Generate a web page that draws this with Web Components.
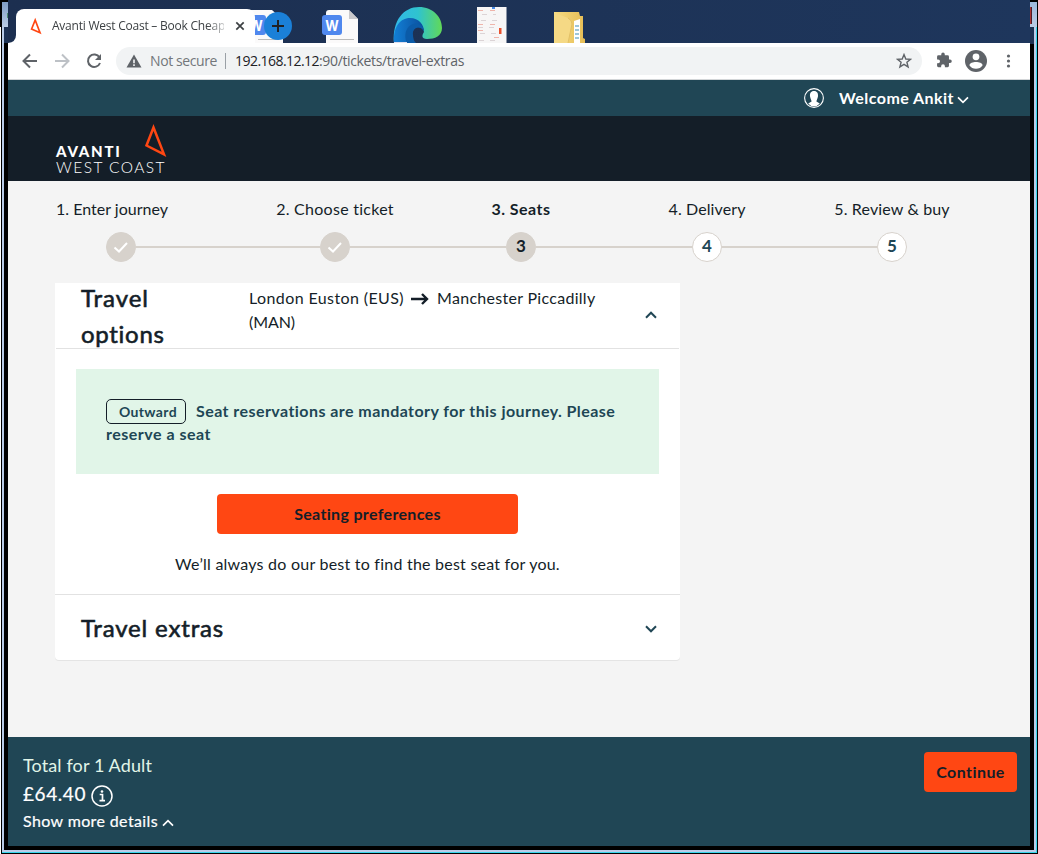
<!DOCTYPE html>
<html lang="en">
<head>
<meta charset="utf-8">
<title>Avanti West Coast – Book Cheap</title>
<style>
html,body{margin:0;width:1038px;height:854px;overflow:hidden;background:#000}
body{font:400 16px/24px Lato,"Open Sans",sans-serif;color:#141e28}
</style>
</head>
<body>
<window-frame>
  <desktop-strip slot="strip"></desktop-strip>
  <browser-toolbar></browser-toolbar>
  <account-bar></account-bar>
  <brand-header></brand-header>
  <main-area></main-area>
  <basket-footer></basket-footer>
</window-frame>
<script>
const define = (name, html, ready) => customElements.define(name, class extends HTMLElement {
  constructor() {
    super();
    const t = document.createElement('template');
    t.innerHTML = html;
    this.attachShadow({ mode: 'open' }).append(t.content.cloneNode(true));
  }
  connectedCallback() { if (ready) ready(this); }
});

/* A single line of text tracked so that it fills the width in its "w" attribute. */
define('fit-text', `<style>:host{display:inline-block;white-space:nowrap}span{display:inline-block}</style><span><slot></slot></span>`, el => {
  const fit = () => {
    const s = el.shadowRoot.querySelector('span');
    const n = el.textContent.length;
    s.style.letterSpacing = '0';
    const w = s.getBoundingClientRect().width;
    if (n && w) s.style.letterSpacing = ((+el.getAttribute('w') - w) / n) + 'px';
  };
  fit();
  document.fonts.ready.then(fit);
  window.addEventListener('load', fit);
});

define('chevron-icon', `<style>:host{display:block;width:12px;height:8px}:host([up]) svg{transform:rotate(180deg)}svg{display:block}</style>
<svg width="12" height="8" viewBox="0 0 12 8" fill="none" stroke="currentColor" style="stroke-width:var(--sw,2)"><path d="M1 1.3 6 6.3 11 1.3"/></svg>`);

define('window-frame', `<style>
:host{display:block;width:1038px;height:854px;box-sizing:border-box;padding:0 8px 8px;
background:
linear-gradient(#4e8a70,#4e8a70) 7px 13px/1px 5px no-repeat,
linear-gradient(#a33,#a33) 1030px 7px/1px 17px no-repeat,
linear-gradient(#501c28,#501c28) 1031px 7px/1px 17px no-repeat,
linear-gradient(#7f9cc2,#b9cce6) 2px 2px/6px 25px no-repeat,
linear-gradient(#9db8da,#b9cce6) 1030px 2px/7px 25px no-repeat,
linear-gradient(#1d3254,#1d3254) 4px 27px/4px 16px no-repeat,
linear-gradient(#1d3254,#1d3254) 1030px 27px/4px 17px no-repeat,
linear-gradient(#38d6ec,#38d6ec) 2px 852px/1034px 1px no-repeat,
linear-gradient(#38d6ec,#38d6ec) 1036px 3px/1px 850px no-repeat,
linear-gradient(#b9cce8,#b9cce8) 2px 850px/1034px 2px no-repeat,
linear-gradient(#b9cce8,#b9cce8) 2px 4px/2px 848px no-repeat,
linear-gradient(#b9cce8,#b9cce8) 1034px 4px/2px 848px no-repeat,
linear-gradient(#fff,#fff) 0 27px/1px 827px no-repeat,
#000}
.c{display:flex;flex-direction:column;height:846px}
</style><div class="c"><slot name="strip"></slot><slot></slot></div>`);

define('desktop-strip', `<style>
:host{display:block;height:43px;position:relative;background:linear-gradient(90deg,#1c2f50,#1e365c);overflow:hidden}
svg.bg{position:absolute;left:0;top:0}
.row{display:flex;padding:9px 0 0 8px;position:relative;height:34px}
.tab{width:239px;height:34px;background:#fff;border-radius:8px 8px 0 0;display:flex;align-items:center;box-sizing:border-box;padding-left:14px;font:12px/16px "Open Sans","Noto Sans",sans-serif;color:#3c4043}
.t{margin-left:9px;width:172px;overflow:hidden;-webkit-mask:linear-gradient(90deg,#000 90%,rgba(0,0,0,.25));mask:linear-gradient(90deg,#000 90%,rgba(0,0,0,.25))}
.x{margin-left:11px}
.add{margin:3px 0 0 9px;width:28px;height:28px;border-radius:50%;background:#1b80d8}
svg{display:block}
</style>
<svg class="bg" width="1022" height="43" viewBox="8 0 1022 43">
<defs><linearGradient id="e" x1="0" x2="1"><stop offset="0" stop-color="#32b8e8"/><stop offset=".5" stop-color="#2fc3cf"/><stop offset="1" stop-color="#62d957"/></linearGradient>
<linearGradient id="b" x1="0" y1="0" x2="1" y2="0"><stop offset="0" stop-color="#127fd6"/><stop offset="1" stop-color="#0b4f9c"/></linearGradient>
<linearGradient id="f" x1="0" x2="1"><stop offset="0" stop-color="#f7dc83"/><stop offset="1" stop-color="#e6bd55"/></linearGradient></defs>
<path d="M8 43Q16 42 16 35V43Z" fill="#fff"/>
<path d="M248 10H272L283 20V43H248Z" fill="#fbfafa"/><rect x="246" y="15" width="20" height="20" rx="3" fill="#5088ee"/><path d="M258 39.5H279" stroke="#bbb"/>
<text x="249.200" y="30.500" font-family="Inter,sans-serif" font-weight="700" font-size="14" textLength="13.500" lengthAdjust="spacingAndGlyphs" fill="#fff">W</text>
<path d="M326 13Q326 10 329 10H349L358 19V43H326Z" fill="#fbfafa"/><path d="M349 10V19H358Z" fill="#c9c9cc"/><path d="M330 39.500H354" stroke="#bbb"/>
<rect x="322" y="15" width="20" height="20" rx="3" fill="#5088ee"/><text x="325.200" y="30.500" font-family="Inter,sans-serif" font-weight="700" font-size="14" textLength="13.500" lengthAdjust="spacingAndGlyphs" fill="#fff">W</text>
<path d="M394 43C392 20 404 7 419 7C433 7 442 17 442 28C442 36 435 39 427 39C421 39 422 35 424 32C423 25 416 22 409 23Z" fill="url(#e)"/>
<path d="M394 43C393 27 400 18 410 18C419 18 424 25 424 31C420 25 413 27 412 34C412 38 413 41 414 43Z" fill="url(#b)"/>
<path d="M407 43C403 34 407 24 416 23.500C421 24 424 28 424 31C419 24 412 28 413 35Q413 40 416 43Z" fill="#0b5ba8"/><path d="M394 42.500H407" stroke="#dde"/>
<rect x="477" y="7" width="29.500" height="36" fill="#f7f6f6"/><g stroke="#dcd4d6" stroke-width="1" stroke-dasharray="5 6"><path d="M482 14.500H496M481 20.500H500M478 27.500H498M480 33.500H497M479 40.500H499"/></g><g stroke="#efb4aa" stroke-dasharray="5 7"><path d="M478 10.500H501M478 24.500H501M478 30.500H490M494 37.500H501"/></g><path d="M492 7H495V9H492Z" fill="#4a8de8"/><path d="M499 28H501.500V34H499Z" fill="#e8512e"/>
<path d="M554 12H579L580 16H583V38L585 39V43H554Z" fill="url(#f)"/><path d="M574 21L580 19V43H574Z" fill="#fff"/><path d="M575 26H579M575 30H579M575 34H579M575 38H579" stroke="#7fb4d0" stroke-width="1.500"/><path d="M555 13L568 18Q572 20 572 24L568 43H555Z" fill="#f5d985"/><path d="M568 18Q572 20 572 24L568 43" fill="none" stroke="#e2c067"/>
</svg>
<div class="row"><div class="tab">
<svg width="13" height="18" viewBox="30 17 13 18"><path d="M35.200 20 31.600 29 40 32.700Z" fill="none" stroke="#ff4713" stroke-width="1.700"/></svg>
<span class="t"><fit-text w="173">Avanti West Coast – Book Cheap</fit-text></span>
<svg class="x" width="10" height="10" viewBox="0 0 10 10"><path d="M1.300 1.300 8.700 8.700M8.700 1.300 1.300 8.700" stroke="#3c4043" stroke-width="1.700"/></svg>
</div><div class="add"><svg width="28" height="28"><path d="M8 14H20M14 8V20" stroke="#202124" stroke-width="2"/></svg></div></div>`);

define('browser-toolbar', `<style>
:host{display:flex;align-items:center;height:37px;box-sizing:border-box;border-bottom:1px solid #d3d6d8;background:#fff;padding-left:12px;font:14px/20px "Open Sans","Noto Sans",sans-serif;color:#5f6368}
svg{display:block}
.nav{display:flex;gap:12px}
.o{display:flex;align-items:center;width:806px;height:28px;border-radius:14px;background:#f1f3f4;margin-left:12px;box-sizing:border-box;padding:0 10px}
.o>fit-text{margin-left:8px;color:#73777b}i{width:1px;height:16px;background:#9aa0a6;margin:0 9px 0 8px}
.u{display:flex}b{font-weight:400;color:#202124}.star{margin-left:auto}
.r{display:flex;align-items:center;margin-left:12px;gap:11px}
</style>
<div class="nav">
<svg width="20" height="20" viewBox="0 0 20 20"><path d="M17 10H4M10 3.500 3.500 10 10 16.500" fill="none" stroke="#5f6368" stroke-width="2"/></svg>
<svg width="20" height="20" viewBox="0 0 20 20"><path d="M3 10H16M10 3.500 16.500 10 10 16.500" fill="none" stroke="#bdc1c6" stroke-width="2"/></svg>
<svg width="20" height="20" viewBox="0 0 20 20"><path d="M15.500 6.500A6.200 6.200 0 1 0 16 12" fill="none" stroke="#5f6368" stroke-width="2"/><path d="M17 3V9H11Z" fill="#5f6368"/></svg></div>
<div class="o"><svg width="16" height="16" viewBox="0 0 16 16"><path d="M8 1.500 15.500 14.500H.5Z" fill="#5f6368"/><path d="M8 6.500V10.300M8 11.300V13" stroke="#fff" stroke-width="1.500"/></svg>
<fit-text w="67">Not secure</fit-text><i></i><span class="u"><b><fit-text w="84">192.168.12.12</fit-text></b><fit-text w="145">:90/tickets/travel-extras</fit-text></span>
<svg class="star" width="16" height="16" viewBox="0 0 16 16"><path d="M8 1.600 9.800 6 14.500 6.300 10.900 9.300 12.100 13.900 8 11.400 3.900 13.900 5.100 9.300 1.500 6.300 6.200 6Z" fill="none" stroke="#5f6368" stroke-width="1.400"/></svg></div>
<div class="r"><svg width="20" height="20" viewBox="0 0 24 24"><path d="M20.500 11H19V7a2 2 0 0 0-2-2h-4V3.500a2.500 2.500 0 0 0-5 0V5H4a2 2 0 0 0-2 2v3.800h1.500a2.700 2.700 0 0 1 0 5.400H2V20a2 2 0 0 0 2 2h3.800v-1.500a2.700 2.700 0 0 1 5.400 0V22H17a2 2 0 0 0 2-2v-4h1.500a2.500 2.500 0 0 0 0-5Z" fill="#5f6368" transform="translate(2 1) scale(.84)"/></svg>
<svg width="22" height="22" viewBox="0 0 22 22"><circle cx="11" cy="11" r="11" fill="#5f6368"/><circle cx="11" cy="6.800" r="3.400" fill="#fff"/><path d="M4.400 15.200C5 11 17 11 17.600 15.200 15 20 7 20 4.400 15.200Z" fill="#fff"/></svg>
<svg width="20" height="20" viewBox="0 0 20 20" fill="#5f6368"><circle cx="10.500" cy="5" r="1.600"/><circle cx="10.500" cy="10" r="1.600"/><circle cx="10.500" cy="15" r="1.600"/></svg></div>`);

define('account-bar', `<style>
:host{display:flex;align-items:center;justify-content:flex-end;height:36px;background:#204655;color:#fff;padding-right:61px;font-weight:700;font-size:16px}
svg{display:block;margin-right:15px}chevron-icon{margin:4px 0 0 3px;--sw:1.7}
</style><svg width="20" height="20" viewBox="0 0 20 20"><circle cx="10" cy="10" r="9.400" fill="none" stroke="#fff" stroke-width="1.100"/><path d="M10 3C13.200 3 14.300 5.300 14 8.200C13.700 10.500 12.500 12 12.400 13.500L15.800 15.400Q13.400 18.300 10 18.300T4.200 15.400L7.600 13.500C7.500 12 6.300 10.500 6 8.200C5.700 5.300 6.800 3 10 3Z" fill="#fff"/></svg>
<fit-text w="115">Welcome Ankit</fit-text><chevron-icon></chevron-icon>`);

define('brand-header', `<style>
:host{display:flex;height:65px;background:#141e28;color:#fff;padding-left:48px}
.n{width:110px;padding-top:27px;display:flex;flex-direction:column}
.a{font-weight:900;font-size:15px;line-height:16px}.w{font-weight:300;font-size:15.500px;line-height:16px;white-space:nowrap;color:#fff}
svg{display:block;margin:8px 0 0 -22px}
</style><div class="n"><fit-text class="a" w="65.500">AVANTI</fit-text><fit-text class="w" w="110">WEST COAST</fit-text></div>
<svg width="24" height="36" viewBox="144 124 24 36"><path d="M153.500 127.500 146.500 145.500 164 154.300Z" fill="none" stroke="#ff4713" stroke-width="2.500"/></svg>`);

define('progress-step', `<style>
:host{display:block;color:#141e28}
.l{text-align:center;height:24px}
.d{display:flex;align-items:center;margin-top:11px}
i{flex:1;height:2px;background:#d7d2cc}
b{width:30px;height:30px;box-sizing:border-box;border-radius:50%;border:1px solid #d7d2cc;background:#fff;color:#204655;text-align:center;font-weight:700;font-size:17px;line-height:26px}
svg{display:block;margin:7px 0 0 6px}
:host([done]) b,:host([now]) b{background:#d7d2cc;color:#141e28}
:host([now]) .l{font-weight:700}
:host([first]) .l{text-align:left}
:host([first]) i:first-child{flex:none;width:50px;background:none}
:host([last]) i:last-child{background:none}
</style><div class="l"><slot></slot></div><div class="d"><i></i><b></b><i></i></div>`, el => {
  el.shadowRoot.querySelector('b').innerHTML = el.hasAttribute('done')
    ? '<svg width="16" height="14" viewBox="0 0 16 14"><path d="M1.500 7.500 6 11.500 14 3" fill="none" stroke="#fff" stroke-width="2"/></svg>'
    : el.getAttribute('num');
});

define('accordion-head', `<style>
:host{display:flex;align-items:center;height:65px;border-bottom:1px solid #e2e2e2;margin:0 1px;padding:0 22px 0 25px}
.t{font-weight:400;-webkit-text-stroke:.6px #141e28;font-size:24px;line-height:36px;width:168px;display:block}
.m{align-self:flex-start;padding-top:3px;flex:1}
</style><div class="t"><slot name="title"></slot></div><div class="m"><slot></slot></div><slot name="icon"></slot>`);

define('action-button', `<style>:host{display:flex;align-items:center;justify-content:center;height:40px;border-radius:4px;background:#ff4713;color:#141e28;font-weight:700;font-size:16px}</style><slot></slot>`);

define('seat-notice', `<style>
:host{display:block;box-sizing:border-box;height:105px;margin:20px 21px 0;padding:30px 30px 0;background:#e1f5e8;color:#204655;font-weight:700;font-size:16px}
.r{display:flex;height:25px;align-items:center}
.b{width:80px;height:25px;box-sizing:border-box;border:1px solid #141e28;border-radius:5px;font-size:14px;line-height:24px;padding-left:12px;margin-right:10px}
.m{margin-top:-2px}
.s{line-height:22px;margin-top:-1px}
</style><div class="r"><div class="b"><fit-text w="58">Outward</fit-text></div><fit-text class="m" w="419.500">Seat reservations are mandatory for this journey. Please</fit-text></div><div class="s"><fit-text w="105">reserve a seat</fit-text></div>`);

define('main-area', `<style>
:host{display:block;height:556px;background:#f4f4f4}
.p{display:grid;grid-template-columns:repeat(4,186px) 184px;padding:16px 0 0 48px;height:86px}
.card{width:625px;height:377px;margin-left:47px;background:#fff;border-radius:0 0 4px 4px;box-shadow:0 1px 0 #e4e4e4}
action-button{width:301px;margin:20px auto 0}
.n{text-align:center;height:42px;padding-top:18px;border-bottom:1px solid #e2e2e2}
.x{border:0}
.arr{display:inline-block;margin:0 8px 0 7px;vertical-align:-1px}
chevron-icon{color:#204655;margin-top:2px}chevron-icon[up]{margin-top:-2px}
</style>
<div class="p">
<progress-step done first><fit-text w="112">1. Enter journey</fit-text></progress-step>
<progress-step done><fit-text w="118">2. Choose ticket</fit-text></progress-step>
<progress-step now num="3"><fit-text w="59">3. Seats</fit-text></progress-step>
<progress-step num="4"><fit-text w="77">4. Delivery</fit-text></progress-step>
<progress-step last num="5"><fit-text w="115.500">5. Review &amp; buy</fit-text></progress-step>
</div>
<div class="card">
<accordion-head><span slot="title"><fit-text w="68">Travel</fit-text><br><fit-text w="84">options</fit-text></span><fit-text w="155">London Euston (EUS)</fit-text><svg class="arr" width="18" height="12" viewBox="0 0 18 12"><path d="M0 6H16M11 1 16 6 11 11" fill="none" stroke="#141e28" stroke-width="2.400"/></svg><fit-text w="158.500">Manchester Piccadilly</fit-text><br><fit-text w="46">(MAN)</fit-text><chevron-icon slot="icon" up></chevron-icon></accordion-head>
<seat-notice></seat-notice>
<action-button><fit-text w="147">Seating preferences</fit-text></action-button>
<div class="n"><fit-text w="384.500">We’ll always do our best to find the best seat for you.</fit-text></div>
<accordion-head class="x"><fit-text slot="title" w="143">Travel extras</fit-text><chevron-icon slot="icon"></chevron-icon></accordion-head>
</div>`);

define('basket-footer', `<style>
:host{display:flex;justify-content:space-between;height:109px;box-sizing:border-box;background:#204655;color:#fff;padding:15px 13px 0 15px}
.l{display:flex;flex-direction:column}
.t{font-size:18px;line-height:27px;color:#e1f5e8;height:27px}
.a{display:flex;align-items:center;font-size:19px;height:30px;line-height:30px;-webkit-text-stroke:.2px #fff}
.a svg{margin:4px 0 0 5px}
.m{display:flex;align-items:center;height:24px;-webkit-text-stroke:.2px #fff}chevron-icon{margin:4px 0 0 4px;--sw:1.7}
action-button{width:93px}
</style><div class="l"><div class="t"><fit-text w="129">Total for 1 Adult</fit-text></div>
<div class="a"><fit-text w="63">£64.40</fit-text><svg width="22" height="22" viewBox="0 0 22 22" fill="none" stroke="#fff"><circle cx="11" cy="11" r="10" stroke-width="1.500"/><path d="M8.700 9.500H11.500V15.500M8.500 15.700H14" stroke-width="1.700"/><circle cx="11" cy="6.500" r="1.300" fill="#fff" stroke="none"/></svg></div>
<div class="m"><fit-text w="135">Show more details</fit-text><chevron-icon up></chevron-icon></div></div>
<action-button><fit-text w="69">Continue</fit-text></action-button>`);
</script>
</body>
</html>
